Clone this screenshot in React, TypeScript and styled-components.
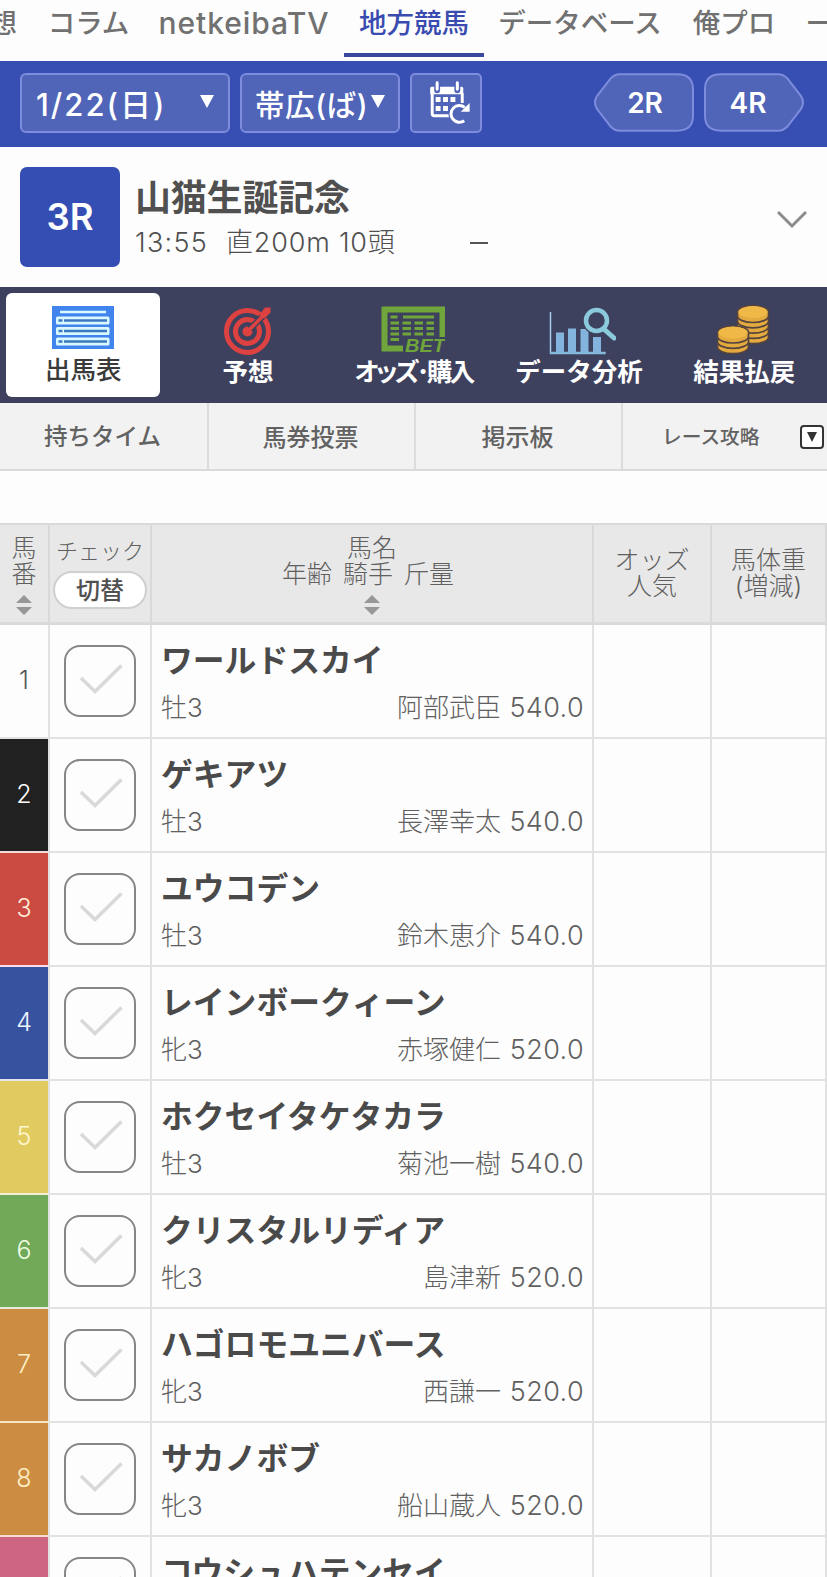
import React from 'react';
import styled, { createGlobalStyle, css } from 'styled-components';

const GlobalStyle = createGlobalStyle`
  * { box-sizing: border-box; }
  html, body { margin: 0; padding: 0; background: #fdfdfd; }
  body {
    width: 827px;
    height: 1577px;
    overflow: hidden;
    font-family: Inter, 'Noto Sans CJK JP', sans-serif;
    color: #505050;
  }
`;

const Page = styled.main`
  width: 827px;
  height: 1577px;
  overflow: hidden;
  display: flex;
  flex-direction: column;
  > * { flex-shrink: 0; }
`;

/* global navigation */
const Nav = styled.nav`
  display: flex;
  height: 61px;
  margin-left: -54px;
  width: 881px;
  overflow: hidden;
  > * { flex-shrink: 0; }
`;

const NavItem = styled.a<{ $w: number; $active?: boolean; $size?: number; $track?: number }>`
  width: ${(p) => p.$w}px;
  height: 57px;
  padding-bottom: 8px;
  display: flex;
  align-items: center;
  justify-content: center;
  white-space: nowrap;
  font-size: ${(p) => p.$size ?? 27.5}px;
  font-weight: 500;
  line-height: 40px;
  letter-spacing: ${(p) => p.$track ?? 0}px;
  color: ${(p) => (p.$active ? '#3a4cb0' : '#717171')};
  border-bottom: 4px solid ${(p) => (p.$active ? '#3b489f' : 'transparent')};
`;

/* date and venue bar */
const RaceBar = styled.div`
  height: 86px;
  padding: 12px 23px 0 20px;
  display: flex;
  gap: 10px;
  background: #374eb3;
  color: #fff;
`;

const Picker = styled.div<{ $w: number; $pad: number }>`
  width: ${(p) => p.$w}px;
  height: 60px;
  padding: 2px ${(p) => p.$pad}px 0;
  display: flex;
  align-items: center;
  justify-content: space-between;
  border: 2px solid #7d8cdc;
  border-radius: 6px;
  background: #5064b8;
  font-weight: 500;
  white-space: nowrap;
`;

const Label = styled.span<{ $size: number; $track?: number }>`
  padding-top: 2px;
  font-size: ${(p) => p.$size}px;
  line-height: 44px;
  letter-spacing: ${(p) => p.$track ?? 0}px;
`;

const Caret = styled.i`
  width: 0;
  height: 0;
  margin-bottom: 6px;
  border: 7px solid transparent;
  border-top: 13px solid #fff;
  border-bottom: 0;
`;

const CalendarButton = styled.button`
  width: 72px;
  height: 60px;
  padding: 0;
  border: 2px solid #7d8cdc;
  border-radius: 5px;
  background: #5064b8;
`;

const Jumps = styled.div`
  margin-left: auto;
  display: flex;
  gap: 10px;
`;

const Jump = styled.div`
  width: 100px;
  height: 59px;
  display: grid;
  > * { grid-area: 1 / 1; }
`;

const JumpText = styled.span<{ $left?: number; $right?: number }>`
  place-self: center;
  padding: 1px ${(p) => p.$right ?? 0}px 0 ${(p) => p.$left ?? 0}px;
  font-size: 28px;
  font-weight: 600;
`;

/* race heading */
const RaceHead = styled.section`
  height: 140px;
  padding: 20px 20px 0;
  display: flex;
`;

const RaceNumber = styled.div`
  width: 100px;
  height: 100px;
  border-radius: 7px;
  background: #344eb4;
  color: #fff;
  display: flex;
  align-items: center;
  justify-content: center;
  font-size: 36.5px;
  font-weight: 600;
`;

const RaceInfo = styled.div`
  flex: 1;
  padding: 9px 0 0 15px;
`;

const RaceTitle = styled.h1`
  margin: 0;
  font-size: 36px;
  line-height: 44px;
  font-weight: 700;
  letter-spacing: -0.2px;
`;

const RaceMeta = styled.div`
  display: flex;
  align-items: center;
  height: 45px;
  font-size: 27px;
  line-height: 40px;
  font-weight: 300;
  white-space: pre;
`;

const MetaCell = styled.span<{ $w: number; $track?: number }>`
  width: ${(p) => p.$w}px;
  letter-spacing: ${(p) => p.$track ?? 0}px;
`;

const Dash = styled.i`
  width: 18px;
  height: 2px;
  background: #555;
`;

const Expand = styled.svg`
  width: 30px;
  height: 20px;
  margin-top: 43px;
`;

/* main tabs */
const Tabs = styled.div`
  height: 116px;
  background: #3e415d;
  display: grid;
  grid-template-columns: repeat(5, 1fr);
`;

const Tab = styled.div<{ $active?: boolean }>`
  display: flex;
  flex-direction: column;
  align-items: center;
  padding-top: 16px;
  color: #fff;
  font-size: 25.5px;
  font-weight: 700;
  line-height: 34px;
  white-space: nowrap;
  ${(p) =>
    p.$active &&
    css`
      margin: 6px 5px 6px 6px;
      padding-top: 10px;
      border-radius: 6px;
      background: #fff;
      color: #3a3a3a;
      line-height: 30px;
      font-weight: 500;
    `}
`;

const TabIcon = styled.svg<{ $w: number; $nudge?: number }>`
  width: ${(p) => p.$w}px;
  height: 52px;
  margin-left: ${(p) => p.$nudge ?? 0}px;
`;

const TabLabel = styled.span<{ $track?: number; $kerned?: boolean }>`
  letter-spacing: ${(p) => p.$track ?? 0}px;
  font-feature-settings: ${(p) => (p.$kerned ? "'palt'" : 'normal')};
`;

/* secondary tabs */
const SubTabs = styled.div`
  height: 68px;
  display: grid;
  grid-template-columns: 209px 207px 207px 204px;
  background: #f2f2f2;
  border-bottom: 2px solid #dadada;
`;

const SubTab = styled.div<{ $size: number }>`
  display: flex;
  align-items: center;
  justify-content: center;
  padding: 0 2px 2px 0;
  border-right: 2px solid #dcdcdc;
  font-size: ${(p) => p.$size}px;
  font-weight: 500;
  color: #626262;
  white-space: nowrap;
  &:last-child {
    border: 0;
    padding-left: 39px;
    padding-right: 0;
    justify-content: space-between;
  }
`;

const MoreBox = styled.span`
  width: 24px;
  height: 24px;
  margin: 3px 3px 0 0;
  border: 2px solid #333;
  border-radius: 4px;
  background: #fff;
  display: flex;
  align-items: center;
  justify-content: center;
  &::after {
    content: '';
    border: 5.5px solid transparent;
    border-top: 10px solid #333;
    border-bottom: 0;
  }
`;

/* race card */
const Card = styled.section`
  margin-top: 52px;
  border-top: 2px solid #dadada;
`;

const columns = css`
  display: grid;
  grid-template-columns: 50px 102px 442px 118px 115px;
`;

const HeadRow = styled.div`
  ${columns}
  height: 100px;
  background: #e8e8e8;
  border-bottom: 3px solid #dadada;
`;

const HeadCell = styled.div<{ $top: number }>`
  display: flex;
  flex-direction: column;
  align-items: center;
  padding-top: ${(p) => p.$top}px;
  border-right: 2px solid #d9d9d9;
  font-size: 25px;
  font-weight: 300;
  line-height: 26px;
  white-space: pre;
  color: #606060;
`;

const Small = styled.span`
  font-size: 22px;
  line-height: 26px;
`;

const Spread = styled.span`
  word-spacing: 4px;
  padding-right: 8px;
`;

const Toggle = styled.button`
  width: 94px;
  height: 38px;
  margin-top: 7px;
  padding: 0;
  border: 2px solid #d0d0d0;
  border-radius: 19px;
  background: #fff;
  color: #505050;
  font: 500 24px/33px Inter, 'Noto Sans CJK JP', sans-serif;
`;

const Sort = styled.svg`
  width: 16px;
  height: 20px;
  margin-top: 8px;
`;

const Row = styled.div`
  ${columns}
  height: 114px;
`;

const Cell = styled.div`
  border-right: 2px solid #e2e2e2;
  border-bottom: 2px solid #e2e2e2;
`;

const NumberCell = styled(Cell)<{ $bg: string; $fg: string; $line: string }>`
  display: flex;
  align-items: center;
  justify-content: center;
  padding-bottom: 3px;
  border-bottom-color: ${(p) => p.$line};
  background: ${(p) => p.$bg};
  background-clip: padding-box;
  color: ${(p) => p.$fg};
  font-size: 25px;
  font-weight: 300;
`;

const CheckCell = styled(Cell)`
  padding: 20px 0 0 14px;
`;

const CheckBox = styled.div`
  width: 72px;
  height: 72px;
  border: 2px solid #868686;
  border-radius: 16px;
`;

const HorseCell = styled(Cell)`
  padding: 12px 8px 0 9px;
`;

const HorseName = styled.div`
  height: 50px;
  font-size: 31.8px;
  line-height: 47px;
  font-weight: 700;
  color: #4a4a4a;
  white-space: nowrap;
`;

const HorseMeta = styled.div`
  display: flex;
  align-items: baseline;
  font-size: 26px;
  line-height: 42px;
  font-weight: 300;
  color: #606060;
`;

const Jockey = styled.span`
  margin-left: auto;
`;

const Weight = styled.span`
  width: 83px;
  text-align: right;
  font-size: 27px;
  letter-spacing: 0.4px;
`;

const SortArrows = () => (
  <Sort viewBox="0 0 16 20">
    <path d="M8 0L16 8H0zM0 12H16L8 20z" fill="#979797" />
  </Sort>
);

const CalendarIcon = () => (
  <svg width="68" height="56" viewBox="0 0 69 56" fill="none">
    <path d="M20.500 14V39q0 2 2 2H38" stroke="#fff" strokeWidth="3" />
    <path d="M18.500 13q0-1.500 1.500-1.500H50q2 0 2 1.500V19H18.500z" fill="#fff" />
    <path d="M51 18V28" stroke="#fff" strokeWidth="3" />
    <path d="M25.500 7V15M46 7V15" stroke="#5064b8" strokeWidth="6" strokeLinecap="round" />
    <path d="M25.500 7.500V14M46 7.500V14" stroke="#fff" strokeWidth="3" strokeLinecap="round" />
    <path d="M24 22h5v5h-5zM31.500 22h5v5h-5zM39 22h5v5h-5zM24 31h5v5h-5zM31.500 31h5v5h-5z" fill="#fff" />
    <circle cx="48" cy="39" r="11" fill="#5064b8" />
    <path d="M53.500 32.500A8.500 8.500 0 1 0 53 46" stroke="#fff" strokeWidth="3" />
    <path d="M58.500 28V37H49.500z" fill="#fff" />
  </svg>
);

const JumpShape = ({ flip }: { flip?: boolean }) => (
  <svg width="100" height="59" viewBox="0 0 101 59">
    <path
      d="M26 1H84Q100 1 100 16V43Q100 58 84 58H26Q21 58 17 54L3 36Q-1 29.500 3 23L17 5Q21 1 26 1z"
      transform={flip ? 'translate(101 0) scale(-1 1)' : undefined}
      fill="#5064b8"
      stroke="#7d8cdc"
      strokeWidth="2"
    />
  </svg>
);

const EntriesIcon = () => (
  <TabIcon $w={62} viewBox="0 0 62 52">
    <path d="M0 3H62V46H0z" fill="#4284ee" />
    <path d="M8 9H54" stroke="#d9fbff" strokeWidth="2.500" />
    {[13.5, 24, 34.5].map((y) => (
      <g key={y}>
        <rect x="4" y={y} width="53.500" height="8" rx="1.500" fill="#d9f8ff" />
        <path d={`M6.500 ${y + 4}h4M12 ${y + 4}h43`} stroke="#3b78bd" strokeWidth="2.500" />
      </g>
    ))}
  </TabIcon>
);

const TargetIcon = () => (
  <TabIcon $w={50} viewBox="0 0 50 52" fill="none">
    <circle cx="24.500" cy="28.500" r="21" stroke="#dd4140" strokeWidth="5" />
    <circle cx="24.500" cy="28.500" r="12" stroke="#dd4140" strokeWidth="5" />
    <circle cx="24.500" cy="28.500" r="5" fill="#dd4140" />
    <path d="M27 26L43 10" stroke="#3e415d" strokeWidth="6.500" />
    <path d="M24.500 28.500L42 11" stroke="#dd4140" strokeWidth="3.500" />
    <path d="M37 11L42 4.500H47.500V9.500L42 15H37z" fill="#dd4140" />
  </TabIcon>
);

const OddsIcon = () => (
  <TabIcon $w={66} $nudge={-2} viewBox="0 0 66 52">
    <path d="M3 6.500H63.500V37M5.500 4V45.500H24" fill="none" stroke="#6fa53a" strokeWidth="6" />
    <path d="M11.500 14H18.500M24 14H55" stroke="#6fa53a" strokeWidth="3" />
    <path
      d="M11.500 20H55M11.500 25.500H55M11.500 31H55M11.500 36.500H22"
      stroke="#6fa53a"
      strokeWidth="3"
      strokeDasharray="8.500 3.500"
    />
    <text
      x="26"
      y="49"
      textLength="40"
      lengthAdjust="spacingAndGlyphs"
      fontFamily="Liberation Sans"
      fontStyle="italic"
      fontWeight="700"
      fontSize="17.500"
      fill="#6fa53a"
      stroke="#3e415d"
      strokeWidth="4"
      paintOrder="stroke"
    >
      BET
    </text>
  </TabIcon>
);

const AnalysisIcon = () => (
  <TabIcon $w={68} $nudge={7} viewBox="0 0 68 52" fill="none">
    <path d="M2.500 9V50H57.500" stroke="#a5cdee" strokeWidth="1.500" />
    <path d="M2 50H57.500" stroke="#82bcdc" strokeWidth="2.500" />
    <path d="M12 50V29.500M24 50V25.500M36.500 50V26M49 50V34" stroke="#82b4de" strokeWidth="8" />
    <circle cx="48.500" cy="17.500" r="14" fill="#3e415d" />
    <circle cx="48.500" cy="17.500" r="10.500" stroke="#8bc9dc" strokeWidth="4.500" />
    <path d="M57 27L66 35" stroke="#8bc9dc" strokeWidth="5" strokeLinecap="round" />
  </TabIcon>
);

const coinStack = (x: number, top: number, count: number) => (
  <g>
    {Array.from({ length: count }, (_, i) => top + (count - 1 - i) * 5.3).map((y) => (
      <path
        key={y}
        d={`M${x} ${y}a15.500 6.500 0 0 1 31 0v4a15.500 6.500 0 0 1-31 0z`}
        fill="#e4aa3e"
        stroke="#54433f"
        strokeWidth="1.700"
      />
    ))}
    <ellipse cx={x + 15.5} cy={top} rx="14.500" ry="6" fill="#f0b847" />
  </g>
);

const CoinsIcon = () => (
  <TabIcon $w={52} $nudge={-2} viewBox="0 0 52 52">
    {coinStack(20.5, 9, 5)}
    {coinStack(0.5, 29.5, 3)}
  </TabIcon>
);

const entries = [
  { name: 'ワールドスカイ', sex: '牡3', jockey: '阿部武臣', weight: '540.0', bg: '#fdfdfd', fg: '#555', line: '#e2e2e2' },
  { name: 'ゲキアツ', sex: '牡3', jockey: '長澤幸太', weight: '540.0', bg: '#212121', fg: '#fff', line: '#f2dcdc' },
  { name: 'ユウコデン', sex: '牡3', jockey: '鈴木恵介', weight: '540.0', bg: '#cb4b42', fg: '#fff0dc', line: '#f6dce6' },
  { name: 'レインボークィーン', sex: '牝3', jockey: '赤塚健仁', weight: '520.0', bg: '#37539f', fg: '#f0f6ff', line: '#e4e6ee' },
  { name: 'ホクセイタケタカラ', sex: '牡3', jockey: '菊池一樹', weight: '540.0', bg: '#e1cb60', fg: '#fff8d0', line: '#f2efd6' },
  { name: 'クリスタルリディア', sex: '牝3', jockey: '島津新', weight: '520.0', bg: '#71a959', fg: '#f0ffe6', line: '#e8eedd' },
  { name: 'ハゴロモユニバース', sex: '牝3', jockey: '西謙一', weight: '520.0', bg: '#cc8d42', fg: '#ffedc4', line: '#f8e3c2' },
  { name: 'サカノボブ', sex: '牝3', jockey: '船山蔵人', weight: '520.0', bg: '#cc8d42', fg: '#ffedc4', line: '#f9dccb' },
  { name: 'コウシュハテンセイ', sex: '', jockey: '', weight: '', bg: '#cc6683', fg: '#fff', line: '#eee' },
];

export default function App() {
  return (
    <>
      <GlobalStyle />
      <Page>
        <Nav>
          <NavItem $w={87}>予想</NavItem>
          <NavItem $w={111}>コラム</NavItem>
          <NavItem $w={200} $size={30} $track={0.9}>netkeibaTV</NavItem>
          <NavItem $w={140} $active>地方競馬</NavItem>
          <NavItem $w={192}>データベース</NavItem>
          <NavItem $w={116}>俺プロ</NavItem>
          <NavItem $w={85}>一口</NavItem>
        </Nav>

        <RaceBar>
          <Picker $w={210} $pad={14}>
            <Label $size={31} $track={2}>1/22(日)</Label>
            <Caret />
          </Picker>
          <Picker $w={160} $pad={13}>
            <Label $size={29.5} $track={0.6}>帯広(ば)</Label>
            <Caret />
          </Picker>
          <CalendarButton>
            <CalendarIcon />
          </CalendarButton>
          <Jumps>
            <Jump>
              <JumpShape />
              <JumpText $left={2}>2R</JumpText>
            </Jump>
            <Jump>
              <JumpShape flip />
              <JumpText $right={12}>4R</JumpText>
            </Jump>
          </Jumps>
        </RaceBar>

        <RaceHead>
          <RaceNumber>3R</RaceNumber>
          <RaceInfo>
            <RaceTitle>山猫生誕記念</RaceTitle>
            <RaceMeta>
              <MetaCell $w={91} $track={1.3}>13:55</MetaCell>
              <MetaCell $w={244} $track={0.8}>直200m 10頭</MetaCell>
              <Dash />
            </RaceMeta>
          </RaceInfo>
          <Expand viewBox="0 0 30 20">
            <path d="M1 2L15 16L29 2" fill="none" stroke="#8c8c8c" strokeWidth="3" />
          </Expand>
        </RaceHead>

        <Tabs>
          <Tab $active>
            <EntriesIcon />
            <TabLabel>出馬表</TabLabel>
          </Tab>
          <Tab>
            <TargetIcon />
            <TabLabel>予想</TabLabel>
          </Tab>
          <Tab>
            <OddsIcon />
            <TabLabel $kerned $track={-2.7}>オッズ･購入</TabLabel>
          </Tab>
          <Tab>
            <AnalysisIcon />
            <TabLabel>データ分析</TabLabel>
          </Tab>
          <Tab>
            <CoinsIcon />
            <TabLabel>結果払戻</TabLabel>
          </Tab>
        </Tabs>

        <SubTabs>
          <SubTab $size={23.5}>持ちタイム</SubTab>
          <SubTab $size={24}>馬券投票</SubTab>
          <SubTab $size={24}>掲示板</SubTab>
          <SubTab $size={19.7}>
            レース攻略
            <MoreBox />
          </SubTab>
        </SubTabs>

        <Card>
          <HeadRow>
            <HeadCell $top={10}>
              <span>馬</span>
              <span>番</span>
              <SortArrows />
            </HeadCell>
            <HeadCell $top={13}>
              <Small>チェック</Small>
              <Toggle>切替</Toggle>
            </HeadCell>
            <HeadCell $top={10}>
              <span>馬名</span>
              <Spread>年齢 騎手 斤量</Spread>
              <SortArrows />
            </HeadCell>
            <HeadCell $top={22}>
              <span>オッズ</span>
              <span>人気</span>
            </HeadCell>
            <HeadCell $top={22}>
              <span>馬体重</span>
              <span>(増減)</span>
            </HeadCell>
          </HeadRow>
          {entries.map((e, i) => (
            <Row key={e.name}>
              <NumberCell $bg={e.bg} $fg={e.fg} $line={e.line}>
                {i < 8 ? i + 1 : null}
              </NumberCell>
              <CheckCell>
                <CheckBox>
                  <svg width="68" height="68" viewBox="0 0 68 68">
                    <path d="M15 31L29 44.500L55.500 18.500" fill="none" stroke="#d9d9d9" strokeWidth="3.500" />
                  </svg>
                </CheckBox>
              </CheckCell>
              <HorseCell>
                <HorseName>{e.name}</HorseName>
                <HorseMeta>
                  <span>{e.sex}</span>
                  <Jockey>{e.jockey}</Jockey>
                  <Weight>{e.weight}</Weight>
                </HorseMeta>
              </HorseCell>
              <Cell />
              <Cell />
            </Row>
          ))}
        </Card>
      </Page>
    </>
  );
}
